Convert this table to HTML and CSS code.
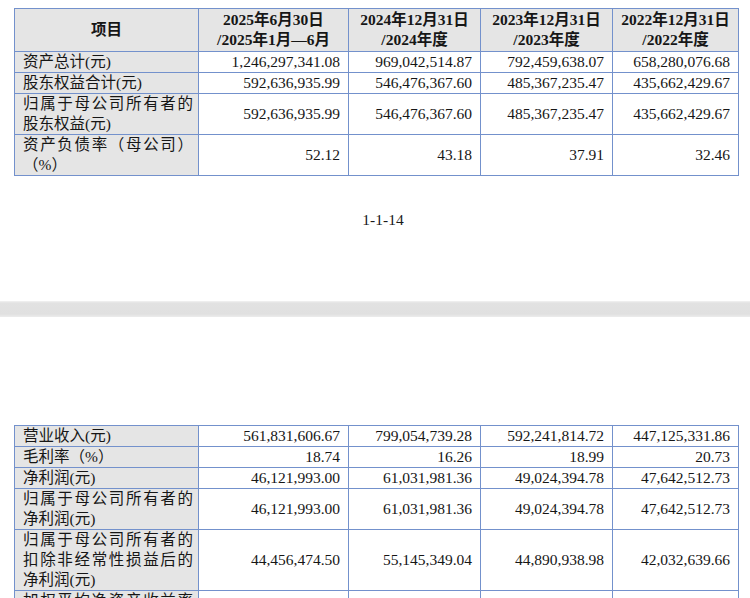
FILE: index.html
```html
<!DOCTYPE html>
<html lang="zh-CN">
<head>
<meta charset="utf-8">
<title>1-1-14</title>
<link rel="stylesheet" href="styles.css">
</head>
<body>
<section class="page page-top">
  <table class="fin">
    <colgroup>
      <col class="c-item"><col class="c-a"><col class="c-b"><col class="c-b"><col class="c-c">
    </colgroup>
    <thead>
      <tr>
        <th>项目</th>
        <th>2025年6月30日<br>/2025年1月—6月</th>
        <th>2024年12月31日<br>/2024年度</th>
        <th>2023年12月31日<br>/2023年度</th>
        <th>2022年12月31日<br>/2022年度</th>
      </tr>
    </thead>
    <tbody>
      <tr><td class="lbl">资产总计(元)</td><td>1,246,297,341.08</td><td>969,042,514.87</td><td>792,459,638.07</td><td>658,280,076.68</td></tr>
      <tr><td class="lbl">股东权益合计(元)</td><td>592,636,935.99</td><td>546,476,367.60</td><td>485,367,235.47</td><td>435,662,429.67</td></tr>
      <tr><td class="lbl"><span class="jl">归属于母公司所有者的</span><span class="ll">股东权益(元)</span></td><td>592,636,935.99</td><td>546,476,367.60</td><td>485,367,235.47</td><td>435,662,429.67</td></tr>
      <tr><td class="lbl"><span class="jl">资产负债率（母公司）</span><span class="ll">（%）</span></td><td>52.12</td><td>43.18</td><td>37.91</td><td>32.46</td></tr>
    </tbody>
  </table>
  <p class="page-num">1-1-14</p>
</section>
<div class="page-gap"></div>
<section class="page page-bottom">
  <table class="fin">
    <colgroup>
      <col class="c-item"><col class="c-a"><col class="c-b"><col class="c-b"><col class="c-c">
    </colgroup>
    <tbody>
      <tr><td class="lbl">营业收入(元)</td><td>561,831,606.67</td><td>799,054,739.28</td><td>592,241,814.72</td><td>447,125,331.86</td></tr>
      <tr><td class="lbl">毛利率（%）</td><td>18.74</td><td>16.26</td><td>18.99</td><td>20.73</td></tr>
      <tr><td class="lbl">净利润(元)</td><td>46,121,993.00</td><td>61,031,981.36</td><td>49,024,394.78</td><td>47,642,512.73</td></tr>
      <tr><td class="lbl"><span class="jl">归属于母公司所有者的</span><span class="ll">净利润(元)</span></td><td>46,121,993.00</td><td>61,031,981.36</td><td>49,024,394.78</td><td>47,642,512.73</td></tr>
      <tr><td class="lbl"><span class="jl">归属于母公司所有者的</span><span class="jl">扣除非经常性损益后的</span><span class="ll">净利润(元)</span></td><td>44,456,474.50</td><td>55,145,349.04</td><td>44,890,938.98</td><td>42,032,639.66</td></tr>
      <tr><td class="lbl"><span class="jl">加权平均净资产收益率</span><span class="ll">(%)</span></td><td>—</td><td>—</td><td>—</td><td>—</td></tr>
    </tbody>
  </table>
</section>
</body>
</html>
```

FILE: styles.css
```css
html, body {
  margin: 0;
  padding: 0;
  background: #ffffff;
  height: 598px;
  overflow: hidden;
}

body {
  font-family: "Liberation Serif", "Noto Sans CJK SC", serif;
  color: #161616;
}

.page {
  padding-left: 14px;
  padding-right: 13px;
}

.page-top {
  padding-top: 8px;
}

.fin {
  width: 724px;
  border-collapse: collapse;
  table-layout: fixed;
  font-size: 15.5px;
  line-height: 20px;
}

.c-item { width: 184px; }
.c-a { width: 150px; }
.c-b { width: 132px; }
.c-c { width: 126px; }

.fin th,
.fin td {
  border: 1px solid #7391cc;
  padding: 0 8px 0 8px;
  vertical-align: middle;
  white-space: nowrap;
}

.fin th {
  background: #e5e5e5;
  font-weight: bold;
  text-align: center;
  padding-top: 1px;
  padding-bottom: 1px;
}

.fin td {
  text-align: right;
  background: #ffffff;
}

.fin td.lbl {
  background: #e5e5e5;
  text-align: left;
  padding-left: 8px;
  padding-right: 5px;
}

.jl {
  display: block;
  text-align: justify;
  text-align-last: justify;
}

.ll {
  display: block;
}

.page-num {
  margin: 34px 0 0 0;
  text-align: center;
  padding-left: 15px;
  font-size: 15.5px;
  line-height: 20px;
  color: #1a1a1a;
}

.page-gap {
  margin-top: 71px;
  height: 16px;
  background: linear-gradient(#f2f2f2 0, #e2e2e2 2px, #e0e0e0 13px, #ececec 16px);
}

.page-bottom {
  padding-top: 108px;
}
```
